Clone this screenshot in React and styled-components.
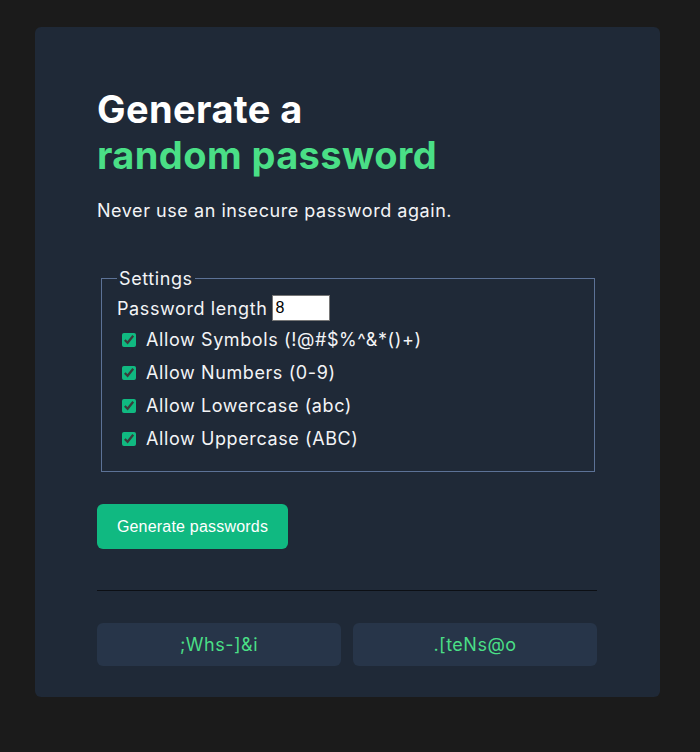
import { useState } from 'react';
import styled, { createGlobalStyle } from 'styled-components';

const GlobalStyle = createGlobalStyle`
  body {
    margin: 0;
    background: #1b1b1b;
    font-family: Inter, "Noto Sans", sans-serif;
  }
`;

const Page = styled.div`
  padding: 27px 0 0 35px;
`;

const Card = styled.main`
  width: 625px;
  height: 670px;
  box-sizing: border-box;
  background: #1f2937;
  border-radius: 6px;
  padding: 59px 63px 0 62px;
`;

const Title = styled.h1`
  margin: 0;
  font-size: 38px;
  line-height: 46px;
  font-weight: 700;
  color: #ffffff;
  letter-spacing: 0.4px;
`;

const Accent = styled.span`
  color: #4adf86;
`;

const Subtitle = styled.p`
  margin: 22px 0 0;
  font-size: 18px;
  color: #f3f4f6;
  letter-spacing: 0.55px;
`;

const Settings = styled.fieldset`
  margin: 47px 2px 0 4px;
  padding: 4px 14px 16px 15px;
  border: 1px solid #5c7296;
  color: #f3f4f6;
  font-size: 18px;
  letter-spacing: 0.6px;
`;

const Legend = styled.legend`
  padding: 0 2px;
`;

const LengthRow = styled.label`
  display: flex;
  align-items: center;
  gap: 5px;
  height: 30px;
`;

const LengthInput = styled.input`
  width: 52px;
  height: 22px;
  border: 1px solid #767676;
  padding: 1px 2px;
  font-size: 16px;
  letter-spacing: 0;
  font-family: "Liberation Sans", Arial, sans-serif;
`;

const Option = styled.label`
  display: flex;
  align-items: center;
  gap: 10px;
  height: 33px;
  padding-left: 5px;
`;

const Box = styled.input`
  width: 14px;
  height: 14px;
  margin: 0;
  accent-color: #10b981;
`;

const Button = styled.button`
  margin-top: 32px;
  width: 191px;
  height: 45px;
  border: none;
  border-radius: 6px;
  background: #10b981;
  color: #ffffff;
  font-family: "Liberation Sans", Arial, sans-serif;
  font-size: 16px;
  letter-spacing: 0.2px;
  cursor: pointer;
`;

const Divider = styled.hr`
  margin: 41px 0 0;
  border: none;
  border-top: 1px solid #0c0f14;
`;

const Results = styled.div`
  display: grid;
  grid-template-columns: 1fr 1fr;
  gap: 12px;
  margin-top: 32px;
`;

const Result = styled.div`
  height: 43px;
  display: flex;
  align-items: center;
  justify-content: center;
  border-radius: 6px;
  background: #273549;
  color: #4adf86;
  font-size: 18px;
  letter-spacing: 0.5px;
`;

const options = [
  'Allow Symbols (!@#$%^&*()+)',
  'Allow Numbers (0-9)',
  'Allow Lowercase (abc)',
  'Allow Uppercase (ABC)',
];

export default function App() {
  const [length, setLength] = useState('8');
  const [checked, setChecked] = useState([true, true, true, true]);

  return (
    <Page>
      <GlobalStyle />
      <Card>
        <Title>
          Generate a<br />
          <Accent>random password</Accent>
        </Title>
        <Subtitle>Never use an insecure password again.</Subtitle>

        <Settings>
          <Legend>Settings</Legend>
          <LengthRow>
            Password length
            <LengthInput value={length} onChange={(e) => setLength(e.target.value)} />
          </LengthRow>
          {options.map((text, i) => (
            <Option key={text}>
              <Box
                type="checkbox"
                checked={checked[i]}
                onChange={() => setChecked(checked.map((c, j) => (j === i ? !c : c)))}
              />
              {text}
            </Option>
          ))}
        </Settings>

        <Button>Generate passwords</Button>
        <Divider />
        <Results>
          <Result>;Whs-]&amp;i</Result>
          <Result>.[teNs@o</Result>
        </Results>
      </Card>
    </Page>
  );
}
